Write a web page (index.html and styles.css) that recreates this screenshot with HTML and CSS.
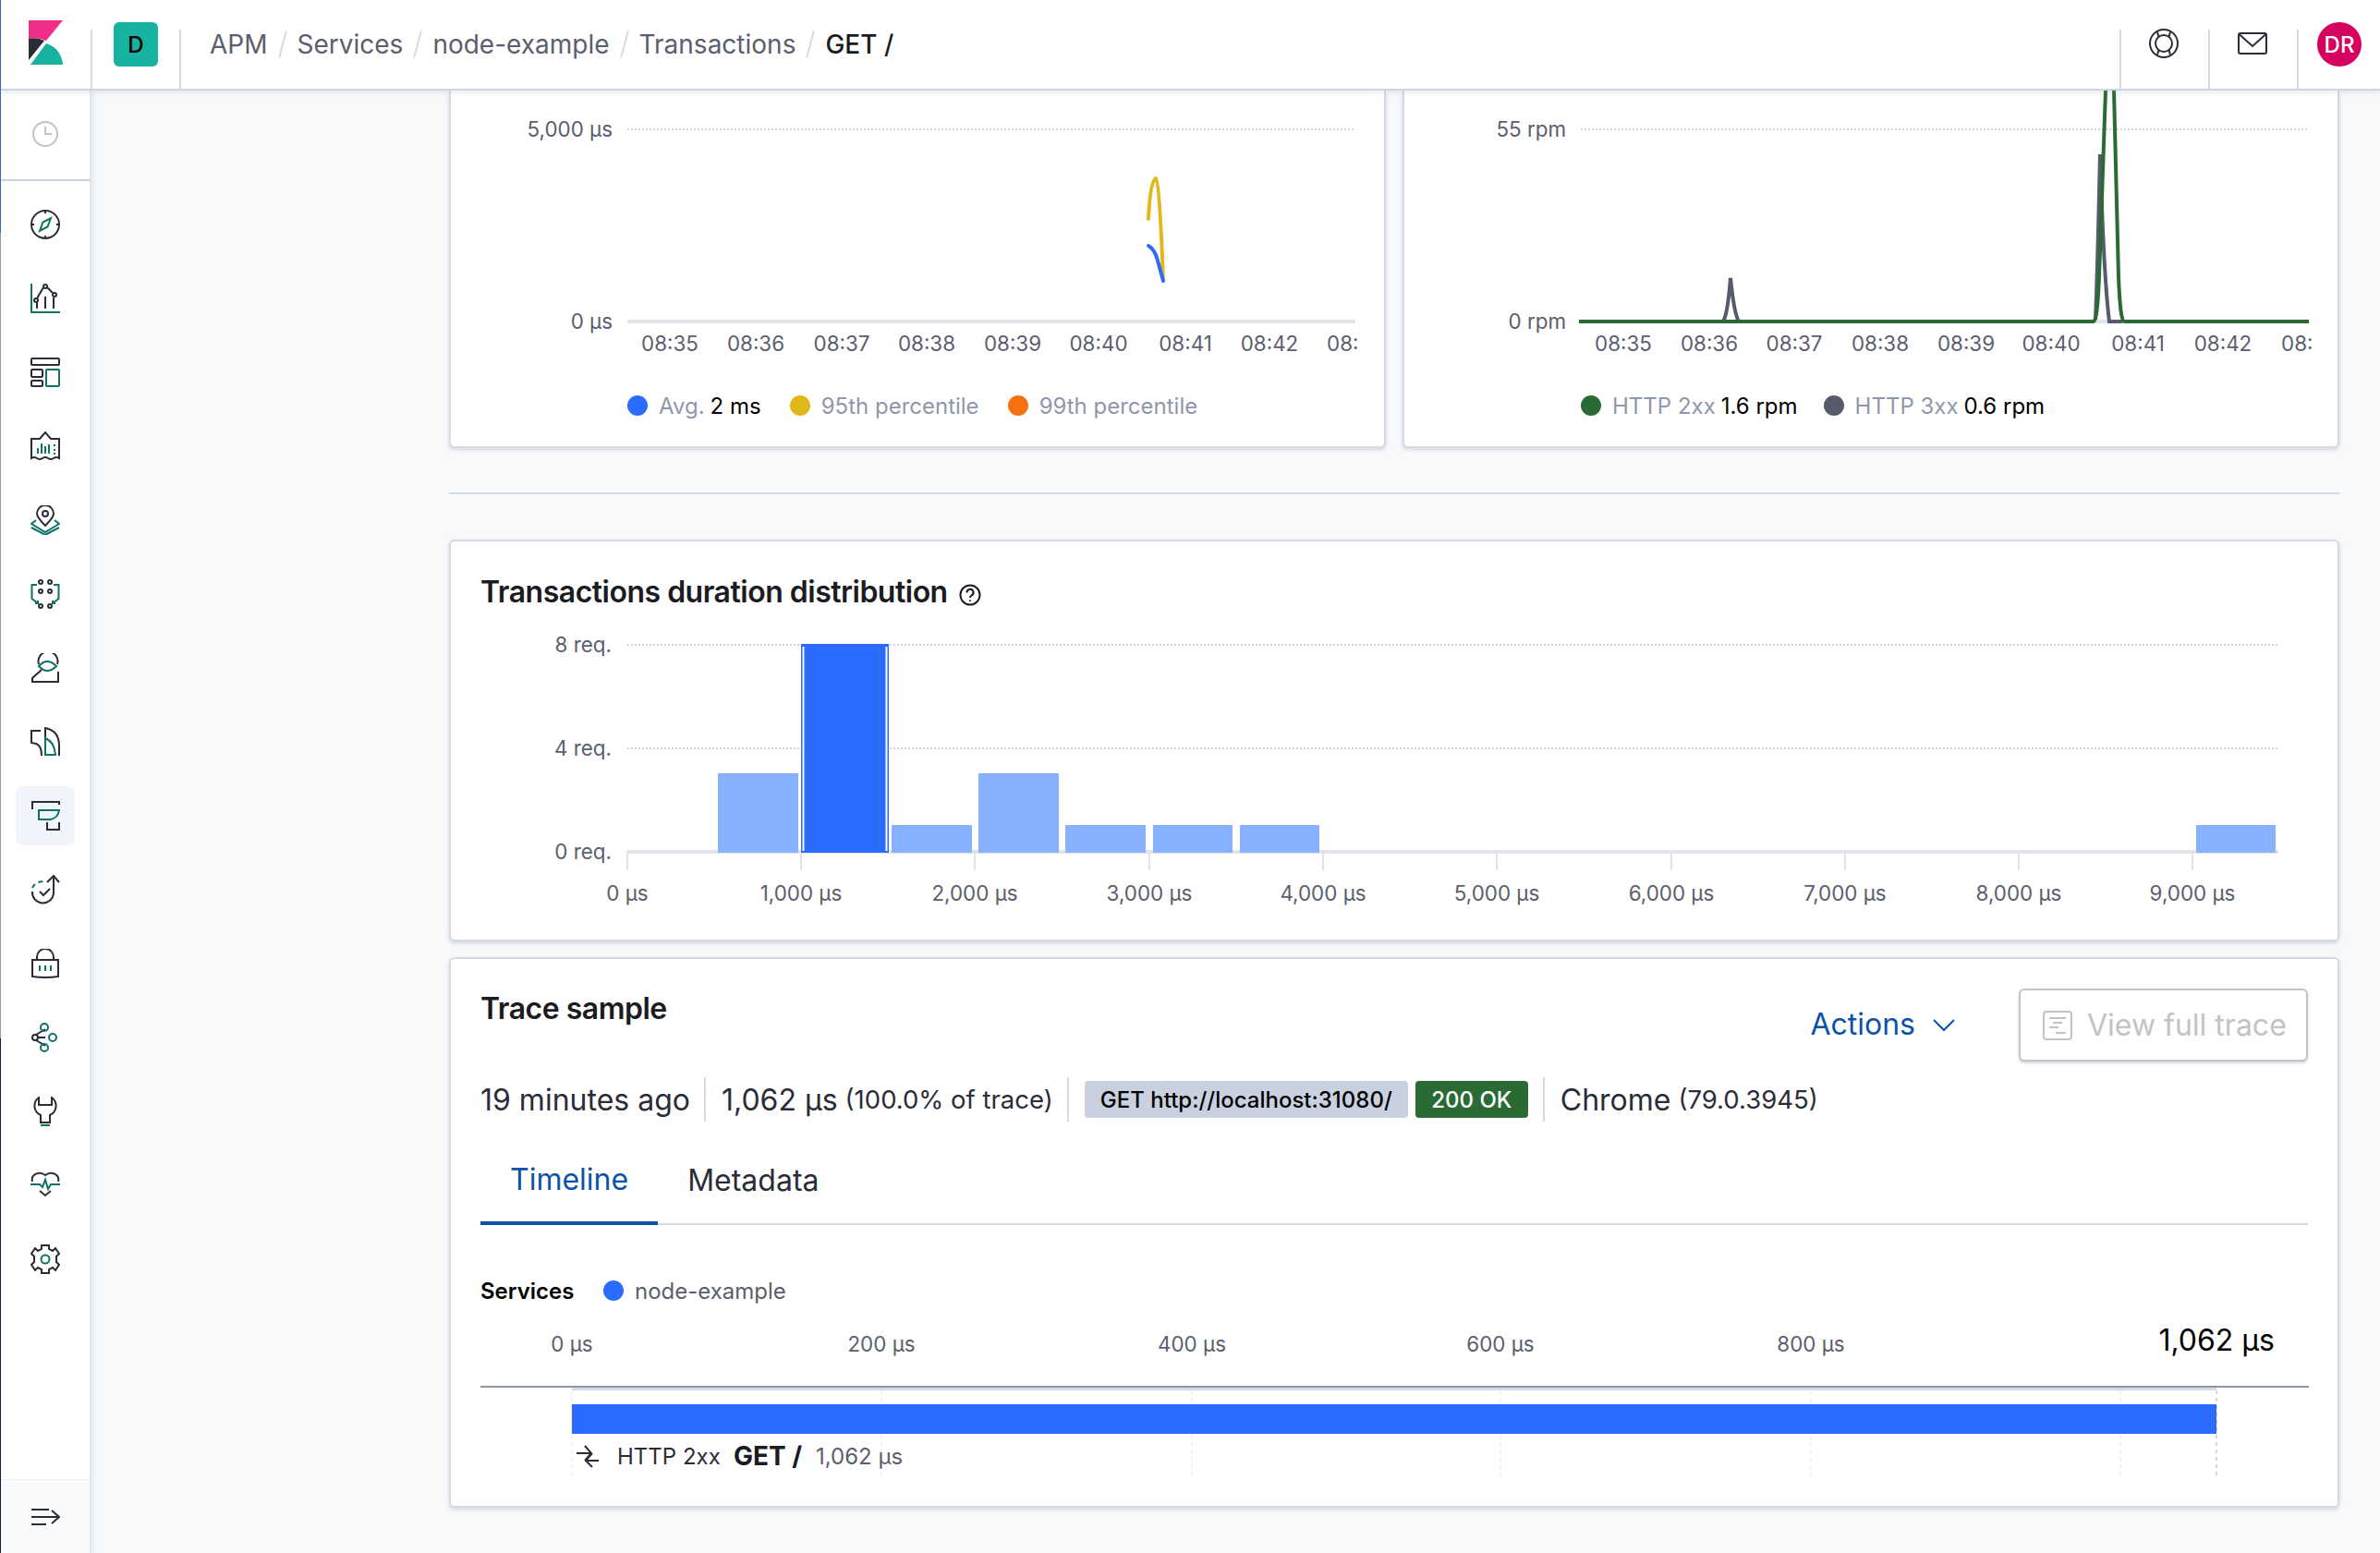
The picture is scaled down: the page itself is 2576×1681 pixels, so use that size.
FILE: index.html
```html
<!DOCTYPE html>
<html lang="en">

<head>
    <meta charset="UTF-8">
    <title>GET / - Transactions - APM</title>
    <link rel="stylesheet" href="styles.css">
</head>

<body>
    <div class="window-edge"></div>

    <header class="topbar">
        <a class="logo-cell">
            <svg width="37" height="48" viewBox="31 22 37 48">
                <path fill="#f02e88" d="M31 22H68L50 44Q40 40 31 42Z" />
                <path fill="#2a2d38" d="M31 42Q40 40 48 44L31 65Z" />
                <path fill="#17b3a0" d="M33 70L50 47Q66 52 68 70Z" />
            </svg>
        </a>
        <div class="space-cell"><span class="space-badge">D</span></div>
        <nav class="crumbs">
            <span>APM</span><i></i><span>Services</span><i></i><span>node-example</span><i></i><span>Transactions</span><i></i><span class="crumb-last">GET /</span>
        </nav>
        <div class="top-cell">
            <svg class="line-icon" width="32" height="32" viewBox="0 0 32 32">
                <circle cx="16" cy="16" r="15" />
                <circle cx="16" cy="16" r="9" />
                <path d="M9 3.500L10.500 9M23 3.500L21.500 9M9 28.500L10.500 23M23 28.500L21.500 23" />
            </svg>
        </div>
        <div class="top-cell">
            <svg class="line-icon" width="32" height="32" viewBox="0 0 32 32">
                <rect x="1" y="5" width="30" height="22" rx="2" />
                <path d="M1.500 6L16 19L30.500 6" />
            </svg>
        </div>
        <div class="top-cell top-cell-user"><span class="avatar">DR</span></div>
    </header>

    <div class="layout">
        <aside class="sidebar">
            <div class="recent">
                <svg class="clock-icon" width="32" height="32" viewBox="0 0 32 32">
                    <circle cx="16" cy="16" r="13" />
                    <path d="M16 8V16H23" />
                </svg>
            </div>
            <ul class="nav-list">
                <li class="nav-item">
                    <svg class="line-icon" width="32" height="32" viewBox="0 0 32 32">
                        <circle cx="16" cy="16" r="15" />
                        <path d="M16 1V4M16 28V31M1 16H4M28 16H31" />
                        <path class="teal" d="M22 9L18.500 18.500L10 23L13.500 13.500Z" />
                    </svg>
                </li>
                <li class="nav-item">
                    <svg class="line-icon" width="32" height="32" viewBox="0 0 32 32">
                        <path class="teal" d="M1 0V31H32" />
                        <path d="M7 27V20M16 27V14M25 27V15" />
                        <path d="M7 16L14 4M18 4L24 10" />
                        <circle cx="6" cy="18" r="2" />
                        <circle cx="16" cy="3" r="2" />
                        <circle cx="26" cy="12" r="2" />
                    </svg>
                </li>
                <li class="nav-item">
                    <svg class="line-icon" width="32" height="32" viewBox="0 0 32 32">
                        <rect x="1" y="1" width="30" height="7" rx="1" />
                        <rect x="1" y="13" width="12" height="8" rx="1" />
                        <rect x="1" y="25" width="12" height="6" rx="1" />
                        <rect class="teal" x="17" y="13" width="14" height="18" rx="1" />
                    </svg>
                </li>
                <li class="nav-item">
                    <svg class="line-icon" width="32" height="32" viewBox="0 0 32 32">
                        <path d="M1 8H10L16 1L22 8H31V29Q28 27 25 29T19 29T13 29T7 29T1 29Z" />
                        <path class="teal" d="M8 24V18M12 24V13M16 24V16M20 24V14M25 15H27M25 20H27M25 24H27" />
                    </svg>
                </li>
                <li class="nav-item">
                    <svg class="line-icon" width="32" height="32" viewBox="0 0 32 32">
                        <path d="M16 22C10 16 7 12 7 9A9 9 0 0 1 25 9C25 12 22 16 16 22Z" />
                        <circle cx="16" cy="9" r="3" />
                        <path class="teal" d="M6 16L1 20L16 29L31 20L26 16M1 24L16 32L31 24" />
                    </svg>
                </li>
                <li class="nav-item">
                    <svg class="line-icon" width="32" height="32" viewBox="0 0 32 32">
                        <circle cx="11" cy="3" r="2" />
                        <circle cx="21" cy="3" r="2" />
                        <circle cx="11" cy="13" r="2" />
                        <circle cx="21" cy="13" r="2" />
                        <circle cx="11" cy="29" r="2" />
                        <circle cx="21" cy="29" r="2" />
                        <path class="teal" d="M7 6H1.500V21L8 26M5 26H8V23M25 6H30.500V21L24 26M27 26H24V23" />
                    </svg>
                </li>
                <li class="nav-item">
                    <svg class="line-icon" width="32" height="32" viewBox="0 0 32 32">
                        <path d="M9 12A10.500 10.500 0 1 1 29 12" />
                        <path d="M12 18L2 27V31H30V20" />
                        <path class="teal" d="M9 14Q18 4 28 14Q18 24 9 14Z" />
                    </svg>
                </li>
                <li class="nav-item">
                    <svg class="line-icon" width="32" height="32" viewBox="0 0 32 32">
                        <path d="M11 4H1V17L6 18Q12 20 12 31" />
                        <path d="M16 31V1Q31 4 31 20V31" />
                        <path class="teal" d="M16 12Q26 16 27 30H16Z" />
                    </svg>
                </li>
                <li class="nav-item nav-item-active">
                    <svg class="line-icon" width="32" height="32" viewBox="0 0 32 32">
                        <path d="M2 9V1H31V4" />
                        <path class="teal" d="M9 10H31Q30 18 22 20H9Z" />
                        <path d="M18 23V31H31V23" />
                    </svg>
                </li>
                <li class="nav-item">
                    <svg class="line-icon" width="32" height="32" viewBox="0 0 32 32">
                        <path d="M25 1V20A11 11 0 0 1 2 18" />
                        <path d="M18 8L25 1L31 8" />
                        <path class="teal dashed" d="M2 14A11 11 0 0 1 16 8" />
                        <path d="M10 18L14 22L21 15" />
                    </svg>
                </li>
                <li class="nav-item">
                    <svg class="line-icon" width="32" height="32" viewBox="0 0 32 32">
                        <path d="M7 12V9A9 9 0 0 1 25 9V12" />
                        <path d="M2 12H30V30Q16 32 2 30Z" />
                        <path class="teal" d="M10 18V24M16 18V24M22 18V24" />
                    </svg>
                </li>
                <li class="nav-item">
                    <svg class="line-icon" width="32" height="32" viewBox="0 0 32 32">
                        <circle cx="5" cy="16" r="3" />
                        <path d="M8 16H16M6 13L16 7M6 19L16 25" />
                        <circle class="teal" cx="15" cy="5" r="4" />
                        <circle class="teal" cx="24" cy="16" r="4" />
                        <circle class="teal" cx="15" cy="27" r="4" />
                    </svg>
                </li>
                <li class="nav-item">
                    <svg class="line-icon" width="32" height="32" viewBox="0 0 32 32">
                        <path d="M9 1A11 11 0 0 0 11 20V28H21V20A11 11 0 0 0 23 1V9H9Z" />
                        <path class="teal" d="M11 31H21" />
                    </svg>
                </li>
                <li class="nav-item">
                    <svg class="line-icon" width="32" height="32" viewBox="0 0 32 32">
                        <path d="M2 12C0 4 10 0 16 5C22 0 32 4 30 12" />
                        <path d="M10 22L16 27L22 22" />
                        <path class="teal" d="M0 15H10L13 18L16 10L19 20L22 15H32" />
                    </svg>
                </li>
                <li class="nav-item">
                    <svg class="line-icon" width="32" height="32" viewBox="0 0 32 32">
                        <path d="M12 1H20V5L24 7L27 4L31 10L28 13V19L31 22L27 28L24 25L20 27V31H12V27L8 25L5 28L1 22L4 19V13L1 10L5 4L8 7L12 5Z" />
                        <circle class="teal" cx="16" cy="16" r="4.500" />
                    </svg>
                </li>
            </ul>
            <div class="collapse">
                <svg class="line-icon" width="32" height="32" viewBox="0 0 32 32">
                    <path d="M1 8H20M1 16H31M1 24H17M23 9L31 16L23 23" />
                </svg>
            </div>
        </aside>

        <main class="main">
            <div class="chart-row">
                <section class="panel panel-clipped">
                    <svg class="plot" width="1010" height="302" viewBox="488 98 1010 302">
                        <line class="grid" x1="679" y1="140" x2="1467" y2="140" />
                        <line class="axis" x1="679" y1="348" x2="1467" y2="348" />
                        <text class="tick end" x="663" y="148">5,000 µs</text>
                        <text class="tick end" x="663" y="356">0 µs</text>
                        <g class="tick mid">
                            <text x="725" y="380">08:35</text>
                            <text x="818" y="380">08:36</text>
                            <text x="911" y="380">08:37</text>
                            <text x="1003" y="380">08:38</text>
                            <text x="1096" y="380">08:39</text>
                            <text x="1189" y="380">08:40</text>
                            <text x="1283" y="380">08:41</text>
                            <text x="1374" y="380">08:42</text>
                        </g>
                        <text class="tick" x="1436" y="380">08:</text>
                        <path class="curve" stroke="#e2b71a" d="M1243 237Q1245 196 1251 193Q1255 196 1259 304" />
                        <path class="curve" stroke="#2b6cff" d="M1243 266Q1250 270 1253 282L1259 304" />
                    </svg>
                    <div class="legend legend-left">
                        <span class="legend-item"><i class="dot dot-blue"></i><span>Avg.</span> <b>2 ms</b></span>
                        <span class="legend-item"><i class="dot dot-yellow"></i><span>95th percentile</span></span>
                        <span class="legend-item"><i class="dot dot-orange"></i><span>99th percentile</span></span>
                    </div>
                </section>
                <section class="panel panel-clipped">
                    <svg class="plot" width="1010" height="302" viewBox="1520 98 1010 302">
                        <line class="grid" x1="1711" y1="140" x2="2498" y2="140" />
                        <line class="axis" x1="1711" y1="348" x2="2498" y2="348" />
                        <text class="tick end" x="1695" y="148">55 rpm</text>
                        <text class="tick end" x="1695" y="356">0 rpm</text>
                        <g class="tick mid">
                            <text x="1757" y="380">08:35</text>
                            <text x="1850" y="380">08:36</text>
                            <text x="1942" y="380">08:37</text>
                            <text x="2035" y="380">08:38</text>
                            <text x="2128" y="380">08:39</text>
                            <text x="2220" y="380">08:40</text>
                            <text x="2314" y="380">08:41</text>
                            <text x="2406" y="380">08:42</text>
                        </g>
                        <text class="tick" x="2469" y="380">08:</text>
                        <path class="curve curve-flat" stroke="#565b6b" d="M1865 348Q1870 340 1873 301Q1877 340 1882 348M2268 346Q2270 300 2273 167Q2277 300 2283 348H2297" />
                        <path class="curve curve-flat" stroke="#2a6b35" d="M1709 348H2266Q2270 348 2272 300L2279 98M2288 98L2293 300Q2295 348 2299 348H2499" />
                    </svg>
                    <div class="legend legend-right">
                        <span class="legend-item"><i class="dot dot-green"></i><span>HTTP 2xx</span> <b>1.6 rpm</b></span>
                        <span class="legend-item"><i class="dot dot-grey"></i><span>HTTP 3xx</span> <b>0.6 rpm</b></span>
                    </div>
                </section>
            </div>

            <hr class="rule">

            <section class="panel panel-dist">
                <h2 class="title title-dist">Transactions duration distribution
                    <svg class="help-icon" width="24" height="24" viewBox="0 0 24 24">
                        <circle cx="12" cy="12" r="10.500" />
                        <path d="M8.500 9.500A3.500 3.500 0 1 1 13.500 12.500Q12 13.500 12 15" />
                        <path d="M12 17.500V19" />
                    </svg>
                </h2>
                <svg class="plot" width="2042" height="355" viewBox="488 661 2042 355">
                    <line class="grid" x1="679" y1="698" x2="2466" y2="698" />
                    <line class="grid" x1="679" y1="810" x2="2466" y2="810" />
                    <line class="axis" x1="679" y1="922" x2="2466" y2="922" />
                    <text class="tick end" x="662" y="706">8 req.</text>
                    <text class="tick end" x="662" y="818">4 req.</text>
                    <text class="tick end" x="662" y="930">0 req.</text>
                    <path class="tick-mark" d="M679 922V942M867 922V942M1055 922V942M1244 922V942M1432 922V942M1620 922V942M1809 922V942M1997 922V942M2185 922V942M2373 922V942" />
                    <g class="tick mid">
                        <text x="679" y="975">0 µs</text>
                        <text x="867" y="975">1,000 µs</text>
                        <text x="1055" y="975">2,000 µs</text>
                        <text x="1244" y="975">3,000 µs</text>
                        <text x="1432" y="975">4,000 µs</text>
                        <text x="1620" y="975">5,000 µs</text>
                        <text x="1809" y="975">6,000 µs</text>
                        <text x="1997" y="975">7,000 µs</text>
                        <text x="2185" y="975">8,000 µs</text>
                        <text x="2373" y="975">9,000 µs</text>
                    </g>
                    <g class="bar">
                        <rect x="777" y="837" width="87" height="86" />
                        <rect x="965" y="893" width="87" height="30" />
                        <rect x="1059" y="837" width="87" height="86" />
                        <rect x="1153" y="893" width="87" height="30" />
                        <rect x="1248" y="893" width="86" height="30" />
                        <rect x="1342" y="893" width="86" height="30" />
                        <rect x="2377" y="893" width="86" height="30" />
                    </g>
                    <rect class="bar-selected" x="867" y="697" width="95" height="226" />
                    <path class="bar-edge" d="M869.500 700V921M959.500 700V921" />
                </svg>
            </section>

            <section class="panel panel-trace">
                <div class="trace-head">
                    <h2 class="title title-trace">Trace sample</h2>
                    <div class="trace-actions">
                        <a class="actions-link">Actions
                            <svg width="24" height="24" viewBox="0 0 24 24">
                                <path d="M1 7L12 18L23 7" />
                            </svg>
                        </a>
                        <button class="trace-button">
                            <svg width="32" height="32" viewBox="0 0 32 32">
                                <rect x="1" y="1" width="30" height="30" rx="3" />
                                <path d="M7 8H25M11 13H21M7 18H17M14 24H25" />
                            </svg>
                            View full trace
                        </button>
                    </div>
                </div>
                <div class="trace-meta">
                    <span class="meta-item">19 minutes ago</span>
                    <span class="meta-item">1,062 µs <small>(100.0% of trace)</small></span>
                    <span class="meta-item meta-badges">
                        <span class="badge badge-url">GET http://localhost:31080/</span>
                        <span class="badge badge-ok">200 OK</span>
                    </span>
                    <span class="meta-item meta-last">Chrome <small>(79.0.3945)</small></span>
                </div>
                <div class="tabs">
                    <a class="tab tab-active">Timeline</a>
                    <a class="tab">Metadata</a>
                </div>
                <div class="services">
                    <b>Services</b>
                    <i class="dot dot-blue"></i>
                    <span>node-example</span>
                </div>
                <svg class="plot" width="2042" height="213" viewBox="488 1417 2042 213">
                    <g class="tick mid">
                        <text x="619" y="1463">0 µs</text>
                        <text x="954" y="1463">200 µs</text>
                        <text x="1290" y="1463">400 µs</text>
                        <text x="1624" y="1463">600 µs</text>
                        <text x="1960" y="1463">800 µs</text>
                    </g>
                    <text class="total end" x="2462" y="1462">1,062 µs</text>
                    <path class="vgrid" d="M619 1505V1600M954 1505V1600M1290 1505V1600M1624 1505V1600M1960 1505V1600M2295 1505V1600" />
                    <path class="vgrid vgrid-end" d="M2399 1505V1600" />
                    <rect class="under-line" x="619" y="1502" width="1780" height="3" />
                    <rect class="time-line" x="520" y="1500" width="1979" height="2" />
                    <rect class="span-bar" x="619" y="1520" width="1780" height="32" />
                    <path class="span-icon" d="M624 1573H640M633 1565L640 1573L633 1581M648 1581H634M641 1573L634 1581L641 1588" />
                    <text class="span-text" x="668" y="1585">HTTP 2xx</text>
                    <text class="span-name" x="794" y="1586">GET /</text>
                    <text class="span-time" x="883" y="1585">1,062 µs</text>
                </svg>
            </section>
        </main>
    </div>
</body>

</html>
```

FILE: styles.css
```css
* {
    box-sizing: border-box;
}

body {
    margin: 0;
    width: 2576px;
    height: 1681px;
    overflow: hidden;
    background: #f8f9fb;
    color: #2a2d38;
    font-family: Inter, "Noto Sans", sans-serif;
    font-size: 28px;
    position: relative;
}

/* strip of the window behind the browser */
.window-edge {
    position: absolute;
    left: 0;
    top: 0;
    width: 1px;
    height: 1681px;
    z-index: 5;
    background: linear-gradient(to bottom, #2f6fb0 0, #2f6fb0 252px, #9a9a9a 252px, #9a9a9a 1124px, #0d2238 1124px);
}

.topbar {
    position: relative;
    z-index: 3;
    display: flex;
    height: 98px;
    background: #fff;
    border-bottom: 2px solid #cdd5e4;
    box-shadow: 0 2px 6px rgba(152, 162, 179, 0.25);
}

.logo-cell {
    width: 98px;
    padding: 22px 0 0 31px;
}

.logo-cell svg {
    display: block;
}

.space-cell {
    width: 97px;
    padding: 24px 0 0 25px;
    position: relative;
}

.space-cell::before,
.space-cell::after,
.top-cell::before {
    content: "";
    position: absolute;
    left: 0;
    top: 32px;
    bottom: 0;
    width: 2px;
    background: #d3dae6;
}

.space-cell::after {
    left: 96px;
}

.space-badge {
    display: flex;
    align-items: center;
    justify-content: center;
    width: 48px;
    height: 48px;
    border-radius: 6px;
    background: #17b3a0;
    color: #000;
    font-size: 24px;
    font-weight: 500;
}

.crumbs {
    display: flex;
    align-items: center;
    height: 96px;
    flex: 1;
    padding: 0 0 0 32px;
    color: #5a5e6e;
    font-size: 28px;
}

.crumbs i {
    width: 2px;
    height: 30px;
    margin: 0 15px;
    background: #d3dae6;
    transform: rotate(15deg);
}

.crumb-last {
    color: #1a1c21;
    font-weight: 500;
}

.top-cell {
    position: relative;
    width: 96px;
    height: 96px;
    display: flex;
    align-items: center;
    justify-content: center;
}

.top-cell svg {
    margin-bottom: 2px;
}

.top-cell-user {
    width: 90px;
    padding-left: 22px;
    justify-content: flex-start;
    align-items: flex-start;
    padding-top: 24px;
}

.avatar {
    display: flex;
    align-items: center;
    justify-content: center;
    width: 48px;
    height: 48px;
    border-radius: 50%;
    background: #d6005f;
    color: #fff;
    font-size: 24px;
    font-weight: 500;
}

.line-icon {
    fill: none;
    stroke: #2a2d38;
    stroke-width: 2;
    display: block;
}

.line-icon .teal {
    stroke: #0e7267;
}

.line-icon .dashed {
    stroke-dasharray: 5 4;
}

.clock-icon {
    fill: none;
    stroke: #c2c3c6;
    stroke-width: 2;
}

.layout {
    display: flex;
    height: 1583px;
}

.sidebar {
    width: 98px;
    flex: none;
    display: flex;
    flex-direction: column;
    background: #fff;
    border-right: 1px solid #dfe3ec;
    box-shadow: 2px 0 6px rgba(152, 162, 179, 0.25);
    position: relative;
    z-index: 2;
}

.recent {
    height: 98px;
    display: flex;
    align-items: center;
    justify-content: center;
    border-bottom: 2px solid #cdd5e4;
    padding-bottom: 2px;
}

.nav-list {
    list-style: none;
    margin: 0;
    padding: 15px 0 0 17px;
    display: flex;
    flex-direction: column;
    gap: 16px;
}

.nav-item {
    width: 64px;
    height: 64px;
    border-radius: 8px;
    display: flex;
    align-items: center;
    justify-content: center;
}

.nav-item-active {
    background: #f1f4fa;
}

.collapse {
    margin-top: auto;
    height: 80px;
    display: flex;
    align-items: center;
    justify-content: center;
    background: #f9fafc;
    border-top: 1px solid #eef0f4;
}

.main {
    flex: 1;
    padding: 0 44px 0 388px;
}

.chart-row {
    display: flex;
    gap: 18px;
}

.panel {
    background: #fff;
    border: 2px solid #d3dae6;
    border-radius: 6px;
    box-shadow: 0 2px 4px rgba(152, 162, 179, 0.4);
}

.panel-clipped {
    width: 1014px;
    height: 387px;
    border-top: none;
    border-top-left-radius: 0;
    border-top-right-radius: 0;
}

.plot {
    display: block;
}

.grid {
    stroke: #d3d6de;
    stroke-width: 2;
    stroke-dasharray: 2 2;
}

.axis {
    stroke: #e2e2e8;
    stroke-width: 4;
}

.tick {
    font-size: 22.400px;
    fill: #5a5e6e;
}

.end {
    text-anchor: end;
}

.mid {
    text-anchor: middle;
}

.curve {
    fill: none;
    stroke-width: 4;
    stroke-linecap: round;
}

.curve-flat {
    stroke-linecap: butt;
}

.legend {
    display: flex;
    height: 40px;
    margin-top: 19px;
    align-items: center;
    font-size: 24px;
    color: #8f97aa;
}

.legend-left {
    padding-left: 191px;
    gap: 31px;
}

.legend-right {
    padding-left: 191px;
    gap: 28px;
}

.legend-item {
    display: flex;
    align-items: center;
}

.legend-item b {
    margin-left: 6px;
    color: #000;
    font-weight: 400;
}

.dot {
    display: block;
    width: 22px;
    height: 22px;
    border-radius: 50%;
    margin-right: 12px;
    flex: none;
}

.dot-blue {
    background: #2b6cff;
}

.dot-yellow {
    background: #e2b71a;
}

.dot-orange {
    background: #f5710f;
}

.dot-green {
    background: #2a6b35;
}

.dot-grey {
    background: #565b6b;
}

.rule {
    height: 2px;
    margin: 48px 0 49px;
    border: 0;
    background: #d3dae6;
}

.panel-dist {
    height: 435px;
    margin-bottom: 17px;
}

.title {
    margin: 0;
    font-size: 32px;
    line-height: 40px;
    font-weight: 600;
    color: #1a1c21;
    letter-spacing: -0.500px;
}

.title-dist {
    display: flex;
    align-items: center;
    gap: 12px;
    padding: 35px 32px 0;
}

.help-icon {
    fill: none;
    stroke: #1a1c21;
    stroke-width: 2;
    margin-top: 6px;
}

.bar rect {
    fill: #88b1ff;
}

.bar-selected {
    fill: #2b6cff;
}

.bar-edge {
    stroke: #fff;
    stroke-width: 2;
    fill: none;
}

.tick-mark {
    stroke: #e2e2e8;
    stroke-width: 2;
    fill: none;
}

.panel-trace {
    height: 596px;
}

.trace-head {
    display: flex;
    justify-content: space-between;
    padding: 32px 32px 0;
}

.title-trace {
    margin-top: 2px;
}

.trace-actions {
    display: flex;
    align-items: center;
    gap: 69px;
}

.actions-link {
    display: flex;
    align-items: center;
    gap: 19px;
    color: #0b52a8;
    font-size: 32px;
    margin-bottom: 2px;
}

.actions-link svg {
    fill: none;
    stroke: #0b52a8;
    stroke-width: 2;
}

.trace-button {
    display: flex;
    align-items: center;
    gap: 16px;
    width: 313px;
    height: 79px;
    padding: 0 0 0 24px;
    border: 2px solid #c2c3c6;
    border-radius: 6px;
    background: #fff;
    color: #c2c3c6;
    font-family: inherit;
    font-size: 32px;
    box-shadow: 0 2px 3px rgba(152, 162, 179, 0.4);
}

.trace-button svg {
    fill: none;
    stroke: #c2c3c6;
    stroke-width: 2;
}

.trace-meta {
    display: flex;
    height: 48px;
    margin: 17px 32px 0;
    font-size: 32px;
}

.meta-item {
    display: flex;
    align-items: center;
    gap: 8px;
    padding-right: 15px;
    margin-right: 17px;
    border-right: 2px solid #d3dae6;
}

.meta-item small {
    font-size: 27.500px;
}

.meta-badges {
    gap: 8px;
    padding-right: 16px;
}

.meta-last {
    border-right: 0;
}

.badge {
    display: flex;
    align-items: center;
    justify-content: center;
    height: 40px;
    border-radius: 4px;
    font-size: 24px;
    font-weight: 500;
}

.badge-url {
    width: 350px;
    background: #c9d1e0;
    color: #000;
}

.badge-ok {
    width: 122px;
    background: #2a6b35;
    color: #fff;
}

.tabs {
    display: flex;
    height: 98px;
    margin: 14px 32px 0;
    border-bottom: 2px solid #d3dae6;
}

.tab {
    display: flex;
    align-items: center;
    height: 98px;
    padding: 0 32px;
    font-size: 32px;
}

.tab-active {
    color: #0b52a8;
    border-bottom: 4px solid #0b52a8;
    padding-top: 2px;
}

.services {
    display: flex;
    align-items: center;
    height: 40px;
    margin: 51px 32px 0;
    font-size: 24px;
    color: #5a5e6e;
}

.services b {
    width: 133px;
    color: #000;
    font-size: 24px;
    font-weight: 600;
}

.total {
    font-size: 32px;
    fill: #000;
}

.vgrid {
    stroke: #e9ebf0;
    stroke-width: 1.500;
    stroke-dasharray: 4 4;
    fill: none;
}

.vgrid-end {
    stroke: #c9ccd4;
}

.under-line {
    fill: #d3dae6;
}

.time-line {
    fill: #8e95a5;
}

.span-bar {
    fill: #2b6cff;
}

.span-icon {
    stroke: #2a2d38;
    stroke-width: 2;
    fill: none;
}

.span-text {
    font-size: 24px;
    fill: #2a2d38;
}

.span-name {
    font-size: 28px;
    font-weight: 700;
    fill: #1a1c21;
}

.span-time {
    font-size: 24px;
    fill: #5a5e6e;
}
```
